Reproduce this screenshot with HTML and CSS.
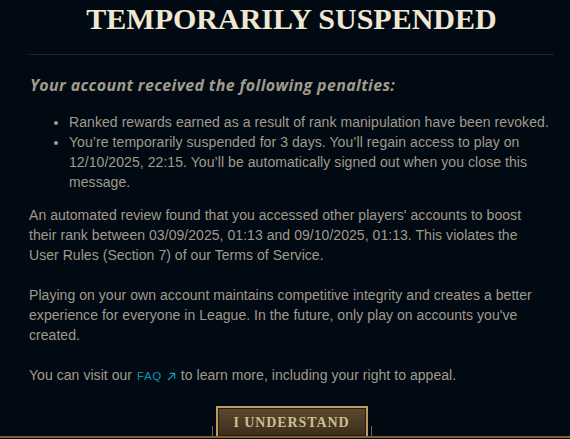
FILE: index.html
```html
<!DOCTYPE html>
<html>
<head>
<meta charset="utf-8">
<link rel="stylesheet" href="styles.css">
</head>
<body>
<div class="modal">
  <h1 class="title">TEMPORARILY SUSPENDED</h1>
  <div class="rule"></div>
  <h2 class="subtitle">Your account received the following penalties:</h2>
  <ul class="penalties">
    <li>Ranked rewards earned as a result of rank manipulation have been revoked.</li>
    <li>You’re temporarily suspended for 3 days. You’ll regain access to play on 12/10/2025, 22:15. You’ll be automatically signed out when you close this message.</li>
  </ul>
  <p class="para">An automated review found that you accessed other players' accounts to boost their rank between 03/09/2025, 01:13 and 09/10/2025, 01:13. This violates the User Rules (Section 7) of our Terms of Service.</p>
  <p class="para">Playing on your own account maintains competitive integrity and creates a better experience for everyone in League. In the future, only play on accounts you've created.</p>
  <p class="para">You can visit our <a class="faq">FAQ<svg class="arrow" width="9" height="9" viewBox="0 0 9 9"><path d="M1 8 L7.6 1.4 M2.6 1.4 H7.6 V6.4" fill="none" stroke="currentColor" stroke-width="1.2"/></svg></a> to learn more, including your right to appeal.</p>
  <div class="footer">
    <span class="tick"></span>
    <button class="btn">I UNDERSTAND</button>
    <span class="tick"></span>
  </div>
</div>
</body>
</html>
```
FILE: styles.css
```css
html, body {
  margin: 0;
  padding: 0;
  background: #010a13;
  height: 100%;
  overflow: hidden;
}
.modal {
  width: 570px;
  height: 439px;
  box-sizing: border-box;
  padding: 0 16px 1px 29px;
  display: flex;
  flex-direction: column;
  color: #a09b8c;
  font-family: "Liberation Sans", Arial, sans-serif;
  font-size: 14px;
  line-height: 20px;
}
.title {
  margin: 0;
  padding-top: 2px;
  height: 34px;
  text-align: center;
  font-family: "Liberation Serif", serif;
  font-weight: bold;
  font-size: 30px;
  line-height: 34px;
  letter-spacing: 0;
  color: #f0e6d2;
}
.rule {
  margin-top: 18px;
  height: 1px;
  background: #1e2328;
}
.subtitle {
  margin: 20px 0 0 1px;
  font-family: "Open Sans", sans-serif;
  font-style: italic;
  font-weight: bold;
  font-size: 16px;
  line-height: 20px;
  color: #a09b8c;
  letter-spacing: 0.35px;
}
.penalties {
  margin: 17px 0 13px 0;
  padding-left: 40px;
  letter-spacing: 0.07px;
}
.para {
  margin: 0 3px 20px 0;
  letter-spacing: 0.05px;
}
.faq {
  color: #0597aa;
  font-size: 11.5px;
  letter-spacing: 0.6px;
  text-decoration: none;
  margin-left: 1px;
}
.arrow {
  vertical-align: -1px;
  margin-left: 5px;
  margin-right: 1px;
  color: #0aa0b4;
}
.footer {
  margin: auto -16px 0 -29px;
  padding: 0 16px 0 29px;
  height: 30px;
  display: flex;
  justify-content: center;
  align-items: flex-end;
  gap: 3px;
  border-bottom: 2px solid #7f6230;
}
.tick {
  width: 1px;
  height: 10px;
  background: #7f6230;
}
.btn {
  width: 152px;
  height: 30px;
  box-sizing: border-box;
  border: 2px solid #b99b5f;
  border-bottom: none;
  box-shadow: inset 0 0 0 1px #241c10;
  background: linear-gradient(#5b4a2f, #3b2d1b);
  color: #cdbe91;
  font-family: "Liberation Serif", serif;
  font-weight: bold;
  font-size: 14px;
  letter-spacing: 0.9px;
  padding: 2px 0 0 0;
}
```
